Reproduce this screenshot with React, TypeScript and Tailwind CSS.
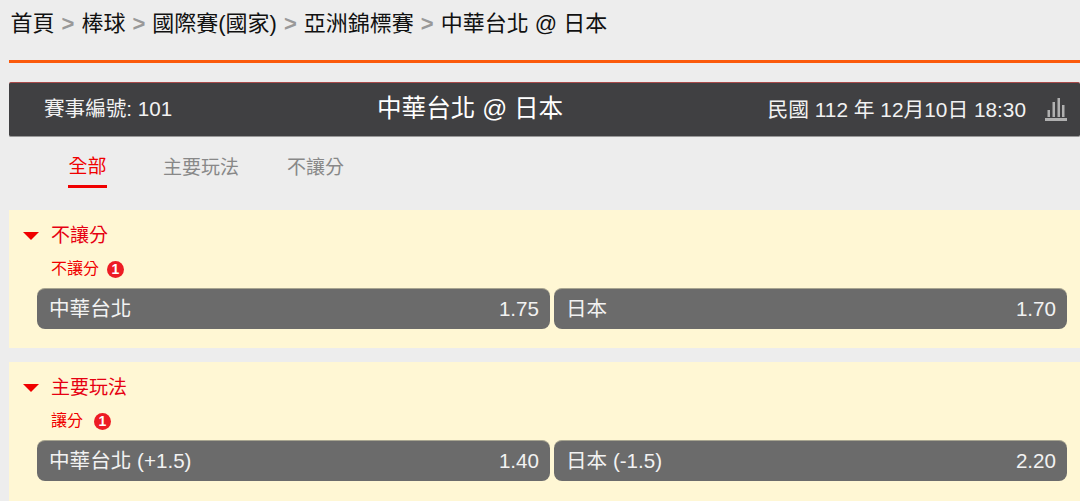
const FONT = "font-['Liberation_Sans','Noto_Sans_CJK_TC',sans-serif]"

const CRUMBS = ['首頁', '棒球', '國際賽(國家)', '亞洲錦標賽', '中華台北 @ 日本']

function Chart() {
  return (
    <svg width="22" height="23" viewBox="0 0 22 23" className="text-[#b0b0b0]">
      <rect x="0" y="20" width="22" height="3" fill="currentColor" />
      <rect x="2.5" y="12" width="2.5" height="7" fill="currentColor" />
      <rect x="7.5" y="4" width="2.5" height="15" fill="currentColor" />
      <rect x="12.5" y="0" width="2.5" height="19" fill="currentColor" />
      <rect x="17" y="7" width="2.5" height="12" fill="currentColor" />
    </svg>
  )
}

function Odd({ name, price }: { name: string; price: string }) {
  return (
    <div className="flex-1 h-[41px] flex items-center justify-between rounded-[8px] bg-[#6b6b6b] border-t border-[#a8a590] pl-[12px] pr-[11px] text-[20.6px] text-[#f2f2f2]">
      <span>{name}</span>
      <span>{price}</span>
    </div>
  )
}

function Market({ title, sub, subGap, home, away, homePrice, awayPrice, last }: {
  title: string; sub: string; subGap: string; home: string; away: string; homePrice: string; awayPrice: string; last?: boolean
}) {
  return (
    <section className={`bg-[#fff7d4] pl-[14px] pr-[13px] pt-[13px] ${last ? 'h-[139px]' : 'h-[138px] mb-[14px]'}`}>
      <div className="flex items-center h-[26px] text-[#e60012] text-[19px]">
        <span className="w-0 h-0 mr-[12px] border-x-[8px] border-x-transparent border-t-[8px] border-t-[#f00000]" />
        <span>{title}</span>
      </div>
      <div className={`flex items-center h-[24px] mt-[8px] pl-[28px] text-[#f00000] text-[16px] ${subGap}`}>
        <span>{sub}</span>
        <span className="w-[17px] h-[17px] rounded-full bg-[#ed1c24] text-white text-[14px] font-bold flex items-center justify-center">1</span>
      </div>
      <div className="flex gap-[4px] pl-[14px] mt-[7px]">
        <Odd name={home} price={homePrice} />
        <Odd name={away} price={awayPrice} />
      </div>
    </section>
  )
}

export default function App() {
  return (
    <div className={`w-[1080px] h-[501px] overflow-hidden bg-[#ededed] pl-[9px] ${FONT}`}>
      <nav className="h-[60px] pt-[9px] pl-[1.5px] flex items-start gap-[7px] text-[22px] leading-[30px] text-[#111]">
        {CRUMBS.map((c, i) => (
          <span key={c} className="flex gap-[7px]">
            {i > 0 && <span className="font-bold text-[#999]">&gt;</span>}
            <span>{c}</span>
          </span>
        ))}
      </nav>
      <div className="h-[3px] bg-[#fb5a0c]" />
      <header className="mt-[19px] h-[55px] grid grid-cols-[333px_auto_1fr] items-center bg-[#404042] border-t border-[#a84a4a] border-b border-b-[#999] rounded-[2px] pl-[35px] pr-[13px] text-[#f2f2f2]">
        <span className="text-[20.6px]">賽事編號: 101</span>
        <span className="text-[24.6px] text-white">中華台北 @ 日本</span>
        <span className="flex items-center justify-end gap-[19px] text-[20.8px]">
          <span>民國 112 年 12月10日 18:30</span>
          <Chart />
        </span>
      </header>
      <div className="h-[73px] flex items-start pl-[59px] text-[19px] text-[#888]">
        <span className="h-[51px] flex items-end w-[39px] justify-center border-b-[3px] border-[#f00000] text-[#f00000] leading-[37px]">全部</span>
        <span className="h-[51px] flex items-end ml-[56px] leading-[40px]">主要玩法</span>
        <span className="h-[51px] flex items-end ml-[48px] leading-[40px]">不讓分</span>
      </div>
      <Market title="不讓分" sub="不讓分" subGap="gap-[8px]" home="中華台北" away="日本" homePrice="1.75" awayPrice="1.70" />
      <Market title="主要玩法" sub="讓分" subGap="gap-[11px]" home="中華台北 (+1.5)" away="日本 (-1.5)" homePrice="1.40" awayPrice="2.20" last />
    </div>
  )
}
